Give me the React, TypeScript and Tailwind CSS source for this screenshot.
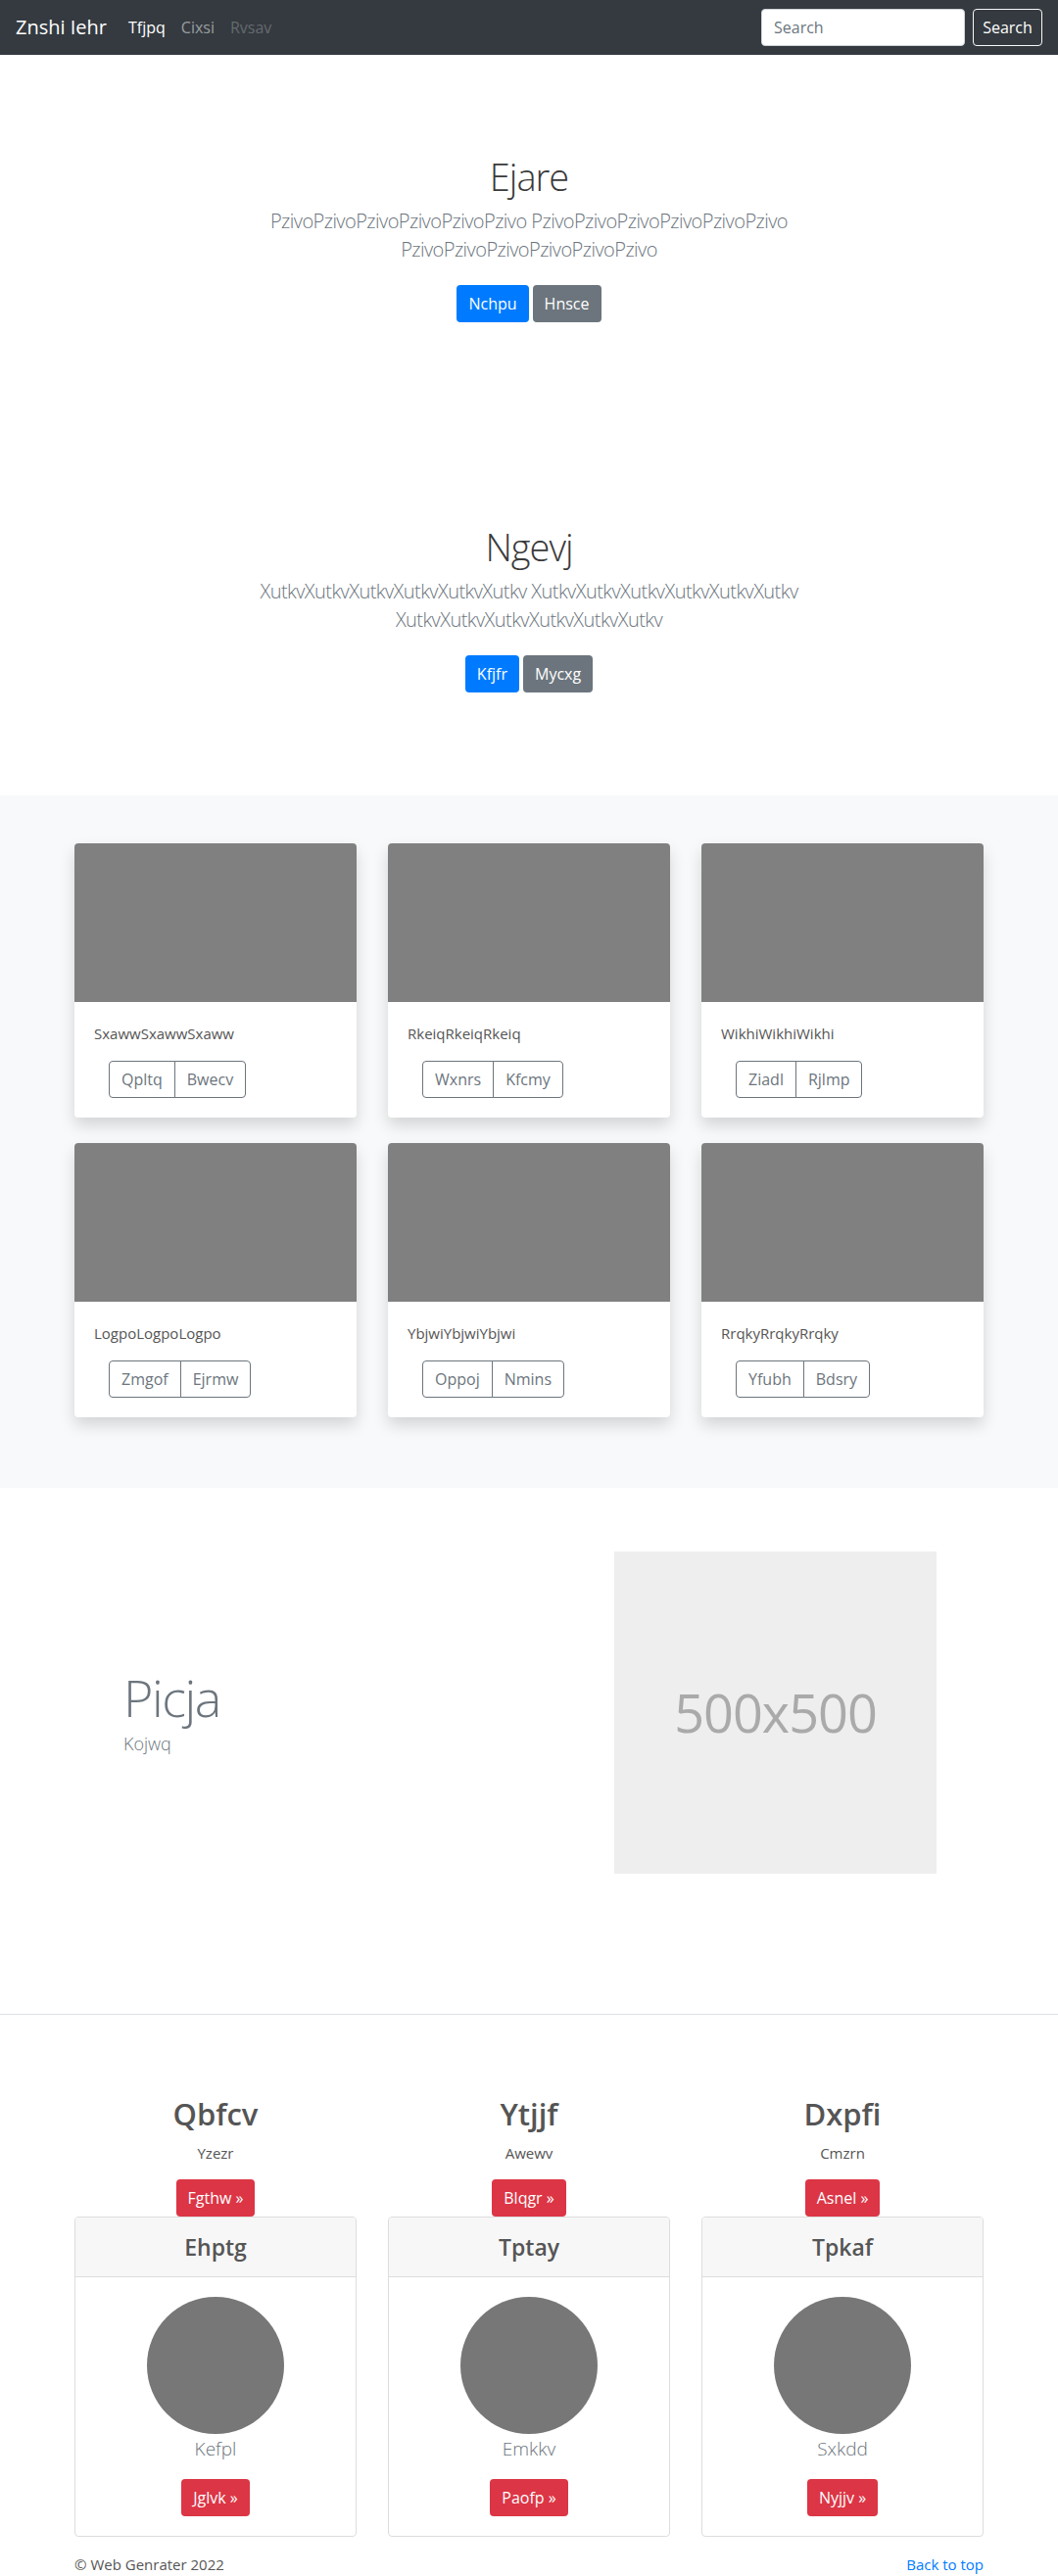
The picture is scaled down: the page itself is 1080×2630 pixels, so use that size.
import React from "react";

const heroes = [
  {
    title: "Ejare",
    word: "Pzivo",
    a: "Nchpu",
    b: "Hnsce",
  },
  {
    title: "Ngevj",
    word: "Xutkv",
    a: "Kfjfr",
    b: "Mycxg",
  },
];

const cards = [
  { t: "SxawwSxawwSxaww", a: "Qpltq", b: "Bwecv" },
  { t: "RkeiqRkeiqRkeiq", a: "Wxnrs", b: "Kfcmy" },
  { t: "WikhiWikhiWikhi", a: "Ziadl", b: "Rjlmp" },
  { t: "LogpoLogpoLogpo", a: "Zmgof", b: "Ejrmw" },
  { t: "YbjwiYbjwiYbjwi", a: "Oppoj", b: "Nmins" },
  { t: "RrqkyRrqkyRrqky", a: "Yfubh", b: "Bdsry" },
];

const cols = [
  { h: "Qbfcv", p: "Yzezr", btn: "Fgthw", ch: "Ehptg", name: "Kefpl", btn2: "Jglvk" },
  { h: "Ytjjf", p: "Awewv", btn: "Blqgr", ch: "Tptay", name: "Emkkv", btn2: "Paofp" },
  { h: "Dxpfi", p: "Cmzrn", btn: "Asnel", ch: "Tpkaf", name: "Sxkdd", btn2: "Nyjjv" },
];

function Hero({ title, word, a, b }: { title: string; word: string; a: string; b: string }) {
  const g = word.repeat(6);
  return (
    <section className="pt-[100px] pb-[105px] text-center">
      <h1 className="text-[38px] font-light leading-[48px] tracking-[-1px] text-[#3a3a3a]">{title}</h1>
      <p className="mt-[7px] text-[20px] font-light leading-[29px] tracking-[-0.55px] text-[#6c757d]">
        <span className="block whitespace-nowrap">
          {g} {g}
        </span>
        <span className="block whitespace-nowrap">{g}</span>
      </p>
      <div className="mt-[22px] flex justify-center gap-1">
        <button className="h-[38px] px-3 rounded bg-[#007bff] text-white text-[16px]">{a}</button>
        <button className="h-[38px] px-3 rounded bg-[#6c757d] text-white text-[16px]">{b}</button>
      </div>
    </section>
  );
}

export default function App() {
  return (
    <div className="font-['Open_Sans','Noto_Sans',sans-serif] text-[16px] bg-white min-h-[2630px]">
      {/* Navbar */}
      <nav className="h-14 bg-[#343a40] flex items-center pl-4 pr-4">
        <span className="text-[20px] leading-[30px] text-white mr-[14px]">Znshi Iehr</span>
        <span className="px-2 text-[16px] text-white">Tfjpq</span>
        <span className="px-2 text-[16px] text-white/50">Cixsi</span>
        <span className="px-2 text-[16px] text-white/25">Rvsav</span>
        <div className="ml-auto flex items-center">
          <input
            placeholder="Search"
            className="w-[208px] h-[38px] rounded bg-white px-3 text-[16px] text-[#495057] placeholder:text-[#6c757d] border border-[#ced4da] mr-2 outline-none"
          />
          <button className="h-[38px] w-[71px] border border-[#f8f9fa] rounded text-white text-[16px]">Search</button>
        </div>
      </nav>

      {heroes.map((h) => (
        <Hero key={h.title} {...h} />
      ))}

      {/* Cards */}
      <section className="bg-[#f8f9fa] pt-[49px] pb-[72px]">
        <div className="w-[928px] mx-auto grid grid-cols-3 gap-x-8 gap-y-[26px]">
          {cards.map((c) => (
            <div key={c.t} className="bg-white rounded overflow-hidden shadow-[0_8px_16px_rgba(0,0,0,0.15)]">
              <div className="h-[162px] bg-[#808080]" />
              <div className="p-5">
                <p className="text-[15px] leading-6 text-[#555]">{c.t}</p>
                <div className="mt-4 ml-[15px] inline-flex">
                  <button className="h-[38px] px-3 border border-[#6c757d] rounded-l text-[16px] text-[#6c757d]">{c.a}</button>
                  <button className="h-[38px] px-3 border border-[#6c757d] -ml-px rounded-r text-[16px] text-[#6c757d]">{c.b}</button>
                </div>
              </div>
            </div>
          ))}
        </div>
      </section>

      {/* Feature */}
      <section className="pt-[65px] pb-[143px] border-b border-[#dee2e6]">
        <div className="w-[928px] mx-auto flex items-center">
          <div className="flex-1 pl-[50px]">
            <h2 className="text-[52px] font-light leading-[1.2] tracking-[-1.5px] text-[#6c757d]">Picja</h2>
            <p className="text-[18px] font-light leading-[30px] text-[#6c757d]">Kojwq</p>
          </div>
          <div className="w-[329px] h-[329px] mr-[48px] bg-[#eeeeee] flex items-center justify-center">
            <span className="text-[54px] tracking-[-1px] text-[#aaaaaa]">500x500</span>
          </div>
        </div>
      </section>

      {/* Three columns */}
      <section className="pt-[82px]">
        <div className="w-[928px] mx-auto grid grid-cols-3 gap-x-8">
          {cols.map((c) => (
            <div key={c.h} className="flex flex-col items-center">
              <h2 className="text-[31px] font-semibold leading-[38px] text-[#555]">{c.h}</h2>
              <p className="mt-[9px] text-[15px] leading-6 text-[#555]">{c.p}</p>
              <button className="mt-[15px] h-[38px] px-3 rounded bg-[#dc3545] text-white text-[16px]">{c.btn} »</button>
              <div className="w-full border border-[#dddddd] rounded overflow-hidden">
                <div className="h-[61px] bg-[#f7f7f7] border-b border-[#dddddd] flex items-center justify-center">
                  <h3 className="text-[23px] font-semibold leading-[29px] text-[#555]">{c.ch}</h3>
                </div>
                <div className="p-5 flex flex-col items-center">
                  <div className="w-[140px] h-[140px] rounded-full bg-[#777777]" />
                  <p className="text-[19px] font-light leading-[30px] text-[#6c757d]">{c.name}</p>
                  <button className="mt-4 h-[38px] px-3 rounded bg-[#dc3545] text-white text-[16px]">{c.btn2} »</button>
                </div>
              </div>
            </div>
          ))}
        </div>
        <footer className="w-[928px] mx-auto mt-4 flex justify-between text-[15px] leading-6">
          <span className="text-[#555]">© Web Genrater 2022</span>
          <span className="text-[#007bff]">Back to top</span>
        </footer>
      </section>
    </div>
  );
}
